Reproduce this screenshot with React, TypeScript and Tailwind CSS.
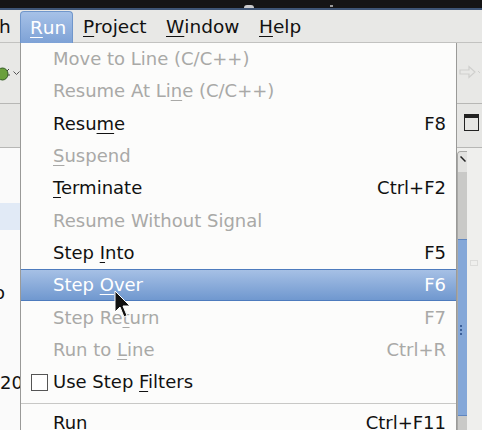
type Item = {
  label: string;
  mn?: number;
  shortcut?: string;
  disabled?: boolean;
  active?: boolean;
  check?: boolean;
};

const items: Item[] = [
  { label: "Move to Line (C/C++)", disabled: true },
  { label: "Resume At Line (C/C++)", mn: 12, disabled: true },
  { label: "Resume", mn: 4, shortcut: "F8" },
  { label: "Suspend", mn: 0, disabled: true },
  { label: "Terminate", mn: 0, shortcut: "Ctrl+F2" },
  { label: "Resume Without Signal", disabled: true },
  { label: "Step Into", mn: 5, shortcut: "F5" },
  { label: "Step Over", mn: 5, shortcut: "F6", active: true },
  { label: "Step Return", mn: 7, shortcut: "F7", disabled: true },
  { label: "Run to Line", mn: 7, shortcut: "Ctrl+R", disabled: true },
  { label: "Use Step Filters", mn: 9, check: true },
];

function Label({ text, mn }: { text: string; mn?: number }) {
  if (mn === undefined) return <>{text}</>;
  return (
    <>
      {text.slice(0, mn)}
      <span className="underline underline-offset-[3px] decoration-1">{text[mn]}</span>
      {text.slice(mn + 1)}
    </>
  );
}

function MenuRow({ item }: { item: Item }) {
  const color = item.active
    ? "text-white"
    : item.disabled
      ? "text-[#a9a9a7]"
      : "text-[#111]";
  return (
    <div
      className={`relative flex h-[32.3px] items-center justify-between pl-[32px] pr-[10px] ${color} ${
        item.active
          ? "border-y border-[#4d7bbd] bg-gradient-to-b from-[#a6c0e5] to-[#7098cf]"
          : ""
      }`}
    >
      {item.check && (
        <span className="absolute left-[10px] top-[8px] h-[17px] w-[17px] border border-[#555] bg-white" />
      )}
      <span>
        <Label text={item.label} mn={item.mn} />
      </span>
      {item.shortcut && <span>{item.shortcut}</span>}
    </div>
  );
}

export default function App() {
  return (
    <div className="relative h-[430px] w-[482px] overflow-hidden bg-[#e8e8e6] font-['DejaVu_Sans',sans-serif] text-[18px] leading-none text-[#111]">
      {/* window title bar */}
      <div className="relative h-[8px] bg-[#151515]">
        <span className="absolute left-[244px] top-[5px] h-[3px] w-[10px] rounded-t bg-[#ccc]" />
        <span className="absolute left-[330px] top-[5px] h-[2px] w-[3px] bg-[#999]" />
      </div>
      <div className="h-[2px] bg-[#3e5575]" />

      {/* menubar */}
      <div className="flex h-[33px] items-stretch border-b border-[#c2c2c0] text-[18.5px]">
        <div className="flex w-[20px] items-center overflow-hidden pt-[3px]">
          <span className="-ml-[1px]">h</span>
        </div>
        <div className="-mb-[1px] mt-[1px] flex w-[53px] items-center rounded-t-[4px] border border-b-0 border-[#7096cb] bg-gradient-to-b from-[#a6c1e7] to-[#7ea2d6] pl-[9px] pt-[2px] text-white">
          <Label text="Run" mn={0} />
        </div>
        <div className="flex w-[93px] items-center pl-[10px] pt-[3px]">
          <Label text="Project" mn={0} />
        </div>
        <div className="flex w-[93px] items-center pt-[3px]">
          <Label text="Window" mn={0} />
        </div>
        <div className="flex items-center pt-[3px]">
          <Label text="Help" mn={0} />
        </div>
      </div>

      <div className="flex h-[387px]">
        {/* left background strip */}
        <div className="flex w-[20px] flex-col overflow-hidden">
          <div className="relative h-[60px] bg-[#e8e8e6]">
            <svg className="absolute left-[-5px] top-[23px]" width="15" height="15" viewBox="0 0 15 15">
              <ellipse cx="7.5" cy="8" rx="5.5" ry="6" fill="#6a9f3c" stroke="#2f5a1e" strokeWidth="1" />
              <path d="M3 5 L1 3 M12 5 L14 3 M2 9 H0 M13 9 H15" stroke="#444" strokeWidth="1" />
            </svg>
            <svg className="absolute left-[13px] top-[28px]" width="7" height="5" viewBox="0 0 7 5">
              <path d="M0.5 0.5 L3.5 3.5 L6.5 0.5" stroke="#555" fill="none" strokeWidth="1" />
            </svg>
          </div>
          <div className="h-px bg-[#b7b7b5]" />
          <div className="h-[43px] bg-[#e6e6e4]" />
          <div className="h-px bg-[#b7b7b5]" />
          <div className="flex flex-1 flex-col bg-[#fafafa]">
            <div className="mt-[55px] h-[27px] bg-[#e1eaf6]" />
            <div className="mt-[52px] h-[22px] whitespace-nowrap leading-[22px]">
              <span className="-ml-[6px]">o</span>
            </div>
            <div className="mt-[68px] h-[22px] whitespace-nowrap leading-[22px]">
              <span>200</span>
            </div>
          </div>
        </div>

        {/* dropdown menu */}
        <div className="w-[437px] border-x border-[#9a9a98] bg-[#fcfcfb]">
          {items.map((item) => (
            <MenuRow key={item.label} item={item} />
          ))}
          <div className="flex h-[11px] items-center">
            <div className="h-px w-full bg-[#c8c8c6]" />
          </div>
          <div className="flex h-[28px] items-center justify-between pl-[32px] pr-[10px] text-[#111]">
            <span>Run</span>
            <span>Ctrl+F11</span>
          </div>
        </div>

        {/* right background strip */}
        <div className="flex w-[25px] flex-col overflow-hidden">
          <div className="relative h-[60px] bg-[#e8e8e6]">
            <svg className="absolute left-[2px] top-[22px]" width="22" height="14" viewBox="0 0 22 14">
              <path d="M1 5 H10 V1.5 L16 7 L10 12.5 V9 H1 Z" fill="none" stroke="#cfcfcd" strokeWidth="1.2" />
              <path d="M19 6 L21 8" stroke="#cfcfcd" strokeWidth="1" />
            </svg>
          </div>
          <div className="h-px bg-[#b7b7b5]" />
          <div className="relative h-[43px] bg-[#e6e6e4]">
            <div className="absolute left-[7px] top-[10px] h-[17px] w-[15px] border-[1.5px] border-t-[4px] border-[#222]" />
          </div>
          <div className="h-px bg-[#b7b7b5]" />
          <div className="flex flex-1 bg-[#efefed]">
            <div className="mt-[3px] flex w-[10px] flex-col overflow-hidden rounded-tl-[4px] border-l border-t border-[#a8a8a6] bg-[#c9c9c7]">
              <div className="relative h-[20px] bg-[#e2e2e0]">
                <svg className="absolute left-[2px] top-[4px]" width="6" height="6" viewBox="0 0 6 6">
                  <path d="M0.5 0.5 L5.5 5.5" stroke="#222" strokeWidth="1.5" />
                </svg>
              </div>
              <div className="h-[67px]" />
              <div className="relative h-[177px] border-y border-[#5f86c0] bg-[#84a7d8]">
                <div className="absolute left-[2px] top-[85px] flex flex-col gap-[2px]">
                  <span className="h-[2px] w-[2px] bg-[#3b5f99]" />
                  <span className="h-[2px] w-[2px] bg-[#3b5f99]" />
                  <span className="h-[2px] w-[2px] bg-[#3b5f99]" />
                </div>
              </div>
            </div>
            <div className="relative flex-1">
              <div className="absolute left-[3px] top-[112px] h-[6px] w-[8px] border border-[#dcdcda]" />
            </div>
          </div>
        </div>
      </div>

      {/* mouse cursor */}
      <svg className="absolute left-[114px] top-[290px]" width="18" height="30" viewBox="0 0 18 30">
        <path d="M1 1 L1 22 L6 17 L10 27 L13 25.5 L9 16 L16 16 Z" fill="#111" stroke="#fff" strokeWidth="1" strokeLinejoin="round" />
      </svg>
    </div>
  );
}
